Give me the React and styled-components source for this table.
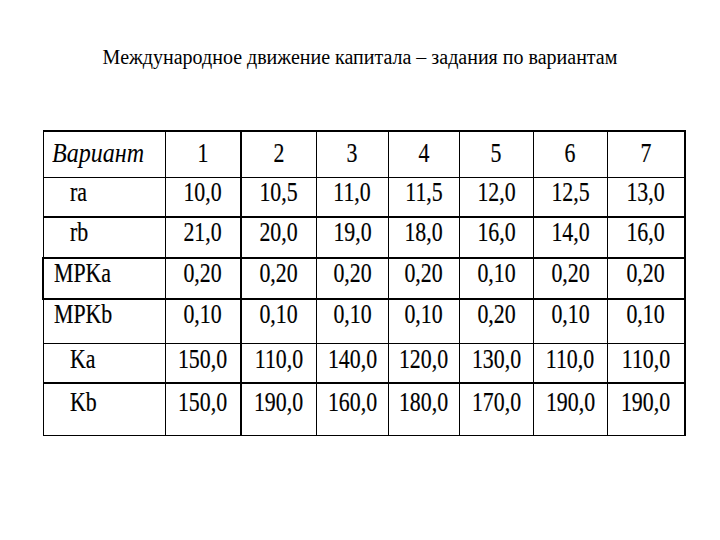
import React from 'react';
import styled, { createGlobalStyle } from 'styled-components';

/* Capital flows — task table by variant */

const SERIF = "'Liberation Serif', 'Times New Roman', serif";

const GlobalStyle = createGlobalStyle`
  html, body {
    margin: 0;
    padding: 0;
    background: #ffffff;
  }
  body {
    width: 720px;
    height: 540px;
    overflow: hidden;
    color: #000;
    font-family: ${SERIF};
  }
`;

const Page = styled.div`
  width: 720px;
  height: 540px;
  display: flex;
  flex-direction: column;
  align-items: center;
  padding-top: 45px;
  box-sizing: border-box;
`;

const Title = styled.h1.attrs({ style: { fontFamily: SERIF } })`
  margin: 0;
  font-family: ${SERIF};
  font-weight: normal;
  font-size: 20px;
  line-height: 24px;
  color: #000;
`;

const TableWrap = styled.div`
  align-self: flex-start;
  margin-left: 42px;
  margin-top: 61px;
`;

const Table = styled.table.attrs({ style: { fontFamily: SERIF } })`
  border-collapse: collapse;
  table-layout: fixed;
  width: 642px;
  font-family: ${SERIF};
  border-top: 2px solid #000;
  border-right: 2px solid #000;
  border-bottom: 1px solid #000;
  border-left: 1px solid #000;
`;

const Row = styled.tr`
  height: ${p => p.$h}px;
  border-bottom: ${p => (p.$thick ? 2 : 1)}px solid #000;
`;

const Cell = styled.td.attrs({ style: { fontFamily: SERIF } })`
  padding: ${p => p.$top || 0}px 0 0 0;
  vertical-align: top;
  text-align: center;
  border-left: ${p => (p.$thick ? 2 : 1)}px solid #000;
  font-family: ${SERIF};
  font-size: 28px;
  line-height: 28px;
  white-space: nowrap;
`;

const LabelCell = styled.td.attrs({ style: { fontFamily: SERIF } })`
  padding: ${p => p.$top || 0}px 0 0 ${p => p.$indent}px;
  vertical-align: top;
  text-align: left;
  border-left: ${p => (p.$thick ? 2 : 1)}px solid #000;
  font-family: ${SERIF};
  font-size: 28px;
  line-height: 28px;
  white-space: nowrap;
`;

const Squeeze = styled.span.attrs({ style: { fontFamily: SERIF } })`
  display: inline-block;
  font-family: ${SERIF};
  -webkit-text-stroke: 0.2px #000;
  transform: scaleX(0.78);
  transform-origin: ${p => (p.$left ? 'left' : 'center')} center;
`;

const Script = styled.span.attrs({ style: { fontFamily: SERIF } })`
  display: inline-block;
  font-family: ${SERIF};
  font-style: italic;
  font-size: 28px;
  transform: scaleX(0.86);
  transform-origin: left center;
`;

const widths = [122, 76, 75, 72, 71, 74, 74, 78];

const rows = [
  { label: 'ra', indent: 26, h: 40, thick: true, values: ['10,0', '10,5', '11,0', '11,5', '12,0', '12,5', '13,0'] },
  { label: 'rb', indent: 26, h: 41, thick: true, values: ['21,0', '20,0', '19,0', '18,0', '16,0', '14,0', '16,0'] },
  { label: 'MPKa', indent: 10, h: 41, thick: true, leftThick: true, values: ['0,20', '0,20', '0,20', '0,20', '0,10', '0,20', '0,20'] },
  { label: 'MPKb', indent: 10, h: 44, thick: false, values: ['0,10', '0,10', '0,10', '0,10', '0,20', '0,10', '0,10'] },
  { label: 'Ka', indent: 26, h: 40, thick: true, top: 1, values: ['150,0', '110,0', '140,0', '120,0', '130,0', '110,0', '110,0'] },
  { label: 'Kb', indent: 26, h: 52, thick: false, top: 4, values: ['150,0', '190,0', '160,0', '180,0', '170,0', '190,0', '190,0'] },
];

const App = () => (
  <>
    <GlobalStyle />
    <Page>
      <Title>Международное движение капитала – задания по вариантам</Title>
      <TableWrap>
        <Table>
          <colgroup>
            {widths.map((w, i) => <col key={i} style={{ width: w }} />)}
          </colgroup>
          <tbody>
            <Row $h={46} $thick={false}>
              <LabelCell $indent={8} $top={7}>
                <Script>Вариант</Script>
              </LabelCell>
              {[1, 2, 3, 4, 5, 6, 7].map((n, i) => (
                <Cell key={n} $top={7} $thick={i === 1}>
                  <Squeeze>{n}</Squeeze>
                </Cell>
              ))}
            </Row>
            {rows.map(r => (
              <Row key={r.label} $h={r.h} $thick={r.thick}>
                <LabelCell $indent={r.indent} $top={r.top} $thick={r.leftThick}>
                  <Squeeze $left>{r.label}</Squeeze>
                </LabelCell>
                {r.values.map((v, i) => (
                  <Cell key={i} $top={r.top} $thick={i === 1}>
                    <Squeeze>{v}</Squeeze>
                  </Cell>
                ))}
              </Row>
            ))}
          </tbody>
        </Table>
      </TableWrap>
    </Page>
  </>
);

export default App;
